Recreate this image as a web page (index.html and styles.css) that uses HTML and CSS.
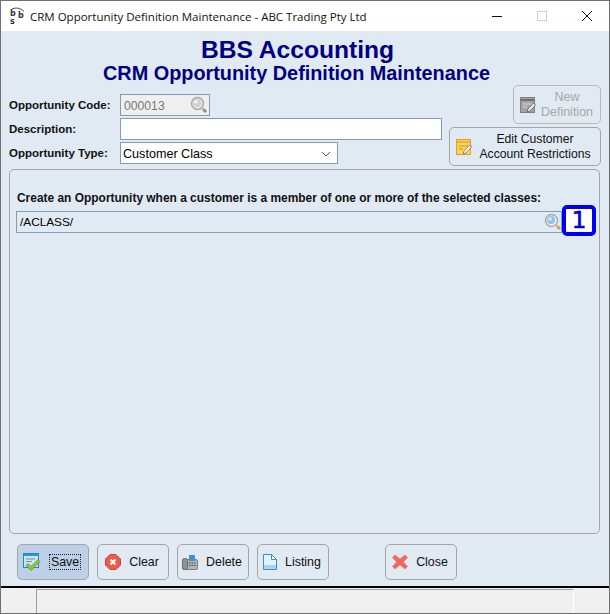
FILE: index.html
```html
<!DOCTYPE html>
<html lang="en">
<head>
<meta charset="utf-8">
<title>CRM Opportunity Definition Maintenance</title>
<link rel="stylesheet" href="styles.css">
</head>
<body>
<div class="window">
  <header class="titlebar">
    <svg class="app-icon" width="16" height="19" viewBox="0 0 16 19" fill="none">
      <path d="M1.500 2.500C5 .2 10 .5 14 4.500" stroke="#444" stroke-width="1"/>
      <text class="logo-letter" x="0" y="9">b</text>
      <text class="logo-letter" x="8" y="11">b</text>
      <text class="logo-letter" x="0" y="17">s</text>
    </svg>
    <span class="title-text">CRM Opportunity Definition Maintenance - ABC Trading Pty Ltd</span>
    <div class="win-controls">
      <svg width="10" height="10" viewBox="0 0 10 10"><path d="M0 5.500h10" stroke="#111" stroke-width="1"/></svg>
      <svg width="10" height="10" viewBox="0 0 10 10"><rect x=".5" y=".5" width="9" height="9" fill="none" stroke="#ccc"/></svg>
      <svg width="10" height="10" viewBox="0 0 10 10"><path d="M0 0l10 10M10 0L0 10" stroke="#111" stroke-width="1"/></svg>
    </div>
  </header>

  <main class="content">
    <h1 class="h-main">BBS Accounting</h1>
    <h2 class="h-sub">CRM Opportunity Definition Maintenance</h2>

    <section class="top">
      <div class="fields">
        <label class="lbl">Opportunity Code:</label>
        <div class="input code">
          <span>000013</span>
          <svg class="mag" width="18" height="18" viewBox="0 0 18 18"><circle cx="7.500" cy="7.500" r="6" fill="#e2e2e2" stroke="#a8a8a8" stroke-width="1.400"/><circle cx="7" cy="7" r="3.800" fill="#cfcfcf"/><circle cx="6" cy="6" r="1.800" fill="#f2f2f2"/><path d="M12 12l1.500 1.500" stroke="#b5b5b5" stroke-width="2"/><path d="M13.500 13.500l2.500 2.500" stroke="#8f8f8f" stroke-width="3"/></svg>
        </div>
        <label class="lbl">Description:</label>
        <div class="input desc"></div>
        <label class="lbl">Opportunity Type:</label>
        <div class="input type">
          <span>Customer Class</span>
          <svg width="10" height="6" viewBox="0 0 10 6"><path d="M1 1l4 4 4-4" fill="none" stroke="#555" stroke-width="1"/></svg>
        </div>
      </div>
      <div class="side">
        <button class="btn new" disabled>
          <svg width="16" height="16" viewBox="0 0 16 16"><rect x=".5" y=".5" width="14" height="15" fill="#a4a4a4" stroke="#808080"/><path d="M1 3h13" stroke="#707070" stroke-width="2"/><path d="M3 7h9M3 10h4" stroke="#dcdcdc"/><path d="M7 15l1-3 5.500-6 2 2-5.500 6z" fill="#eee" stroke="#606060" stroke-width=".8"/></svg>
          <span>New<br>Definition</span>
        </button>
        <button class="btn edit">
          <svg width="16" height="16" viewBox="0 0 16 16"><rect x=".5" y=".5" width="14" height="15" fill="#fbd45e" stroke="#e0a028"/><path d="M1 3h13" stroke="#f0b030" stroke-width="2"/><path d="M3 7h9M3 10h4" stroke="#cf9428"/><path d="M7 15l1-3 5.500-6 2 2-5.500 6z" fill="#f6f2e2" stroke="#a06a50" stroke-width=".8"/><path d="M13.500 6l2 2 .5-1-2-2z" fill="#d080c0"/></svg>
          <span>Edit Customer<br>Account Restrictions</span>
        </button>
      </div>
    </section>

    <section class="panel">
      <p class="panel-label">Create an Opportunity when a customer is a member of one or more of the selected classes:</p>
      <div class="class-field">
        <span>/ACLASS/</span>
        <svg class="mag" width="18" height="18" viewBox="0 0 18 18"><circle cx="7.500" cy="7.500" r="6" fill="#e8eef3" stroke="#a8a8a8" stroke-width="1.400"/><circle cx="7" cy="7" r="4" fill="#8cc4e8"/><circle cx="6" cy="6" r="2" fill="#c6e4f6"/><path d="M12 12l1.500 1.500" stroke="#b5b5b5" stroke-width="2"/><path d="M13.500 13.500l2.500 2.500" stroke="#d8a040" stroke-width="3"/></svg>
      </div>
      <div class="badge">1</div>
    </section>

    <nav class="actions">
      <button class="act active">
        <svg width="18" height="18" viewBox="0 0 18 18"><rect x=".5" y=".5" width="15" height="14" fill="#c8e6f6" stroke="#1f88c0"/><path d="M1 2h14" stroke="#2b95cc" stroke-width="2"/><path d="M3 6h9M3 8.500h6" stroke="#8a8a8a"/><path d="M5 10.500l3 3 7-7 2 2-9 9-5-5z" fill="#8ec63f" stroke="#4f8f20" stroke-width=".7"/></svg>
        <span class="focus">Save</span>
      </button>
      <button class="act">
        <svg width="16" height="16" viewBox="0 0 16 16"><path d="M5 .5h6L15.500 5v6L11 15.500H5L.5 11V5z" fill="#ee5a4a" stroke="#c9443a"/><path d="M5.500 5.500l5 5M10.500 5.500l-5 5" stroke="#fff" stroke-width="2.200"/></svg>
        <span>Clear</span>
      </button>
      <button class="act">
        <svg width="16" height="16" viewBox="0 0 16 16"><rect x=".5" y="5.500" width="15" height="10" rx="1.500" fill="#b4b4b4" stroke="#808080"/><rect x=".5" y="4.500" width="5" height="11" rx="2" fill="#939393" stroke="#6c6c6c"/><rect x="7" y="1" width="6" height="6" fill="#3f93d2"/><path d="M7 9h1.500M9.500 9H11M12 9h1.500M7 11.500h1.500M9.500 11.500H11M12 11.500h1.500" stroke="#444"/></svg>
        <span>Delete</span>
      </button>
      <button class="act">
        <svg width="14" height="16" viewBox="0 0 14 16"><path d="M.5.5h8l5 5v10H.5z" fill="#e4f3fb" stroke="#3a8fc5"/><path d="M8.500.5v5h5z" fill="#fff" stroke="#3a8fc5"/><path d="M1 11h12v4H1z" fill="#a8d4ee"/></svg>
        <span>Listing</span>
      </button>
      <button class="act close">
        <svg width="16" height="16" viewBox="0 0 16 16"><path d="M3 1l5 4 5-4 2.500 2.500L11.500 8l4 4.500L13 15 8 11l-5 4-2.500-2.500 4-4.500-4-4.500z" fill="#f2695c" stroke="#d6877d" stroke-width=".7"/></svg>
        <span>Close</span>
      </button>
    </nav>
  </main>

  <footer class="statusbar">
    <div class="status-cell"></div>
  </footer>
</div>
</body>
</html>
```
FILE: styles.css
```css
* { box-sizing: border-box; }
html, body { margin: 0; padding: 0; }
body { width: 610px; height: 614px; overflow: hidden; background: #fff; font-family: "Liberation Sans", Arial, sans-serif; font-size: 12px; color: #000; }

.window { width: 610px; height: 614px; display: flex; flex-direction: column; border: 1px solid #707070; }

.titlebar { height: 30px; flex: none; background: #fff; display: flex; align-items: center; padding-left: 9px; }
.app-icon { margin-right: 4px; }
.logo-letter { font-family: "DejaVu Sans", sans-serif; font-size: 8px; font-weight: bold; fill: #333; }
.title-text { font-family: "Open Sans", "Noto Sans", sans-serif; font-size: 11.500px; color: #111; white-space: nowrap; }
.win-controls { margin-left: auto; margin-right: 17px; display: flex; gap: 35px; }

.content { flex: 1 1 auto; background: #e1e9f3; display: flex; flex-direction: column; padding: 6px 0 0 8px; min-height: 0; }
.h-main { margin: 0; font-size: 24.600px; line-height: 26px; font-weight: bold; color: #000080; text-align: center; width: 577px; }
.h-sub { margin: 0 0 2px; font-size: 19.850px; line-height: 20px; font-weight: bold; color: #000080; text-align: center; width: 575px; }

.top { display: flex; justify-content: space-between; height: 84px; width: 592px; flex: none; }
.fields { display: grid; grid-template-columns: 111px auto; grid-auto-rows: 22px; row-gap: 2px; align-content: start; justify-items: start; align-items: center; padding-top: 9px; }
.lbl { font-weight: bold; font-size: 11.500px; color: #111; }
.input { height: 22px; background: #fff; border: 1px solid #7f9db9; display: flex; align-items: center; padding: 1px 2px 0; font-size: 12.600px; }
.code { width: 90px; background: #efefef; color: #777; justify-content: space-between; padding-left: 3px; padding-right: 0; font-size: 12.200px; }
.code .mag { margin: -1px 1px 0 0; }
.desc { width: 322px; }
.type { width: 218px; justify-content: space-between; padding-right: 6px; }

.side { display: flex; flex-direction: column; align-items: flex-end; gap: 3px; }
.btn { font-family: inherit; font-size: 12px; line-height: 15px; background: #e1e9f3; border: 1px solid #a5a5a5; border-radius: 5px; display: flex; align-items: center; padding: 0 6px; text-align: center; color: #111; }
.btn span { flex: 1; padding-left: 3px; }
.new { width: 88px; height: 39px; color: #a8a8a8; border-color: #b8b8b8; font-size: 12.500px; padding-right: 5px; }
.edit { width: 152px; height: 39px; font-size: 12.200px; padding-right: 5px; }

.panel { position: relative; width: 591px; height: 365px; flex: none; border: 1px solid #a5a5a5; border-radius: 5px; padding: 21px 7px 0; }
.panel-label { margin: 0 0 6px; font-weight: bold; font-size: 11.950px; line-height: 14px; color: #111; }
.class-field { width: 546px; height: 22px; margin-left: -1px; border: 1px solid #7f9db9; display: flex; align-items: center; justify-content: space-between; padding: 0 0 0 3px; font-size: 11.800px; }
.class-field .mag { margin-right: -1px; }
.badge { position: absolute; left: 552px; top: 35px; width: 34px; height: 31px; background: #fff; border: 4px solid #0000f0; border-radius: 5px; color: #0000e0; font-family: "DejaVu Sans", sans-serif; font-size: 23px; -webkit-text-stroke: .6px #0000e0; line-height: 23px; text-align: center; }

.actions { display: flex; gap: 8px; padding: 10px 0 0 8px; }
.act { font-family: inherit; font-size: 12.400px; width: 72px; height: 36px; background: #e1e9f3; border: 1px solid #a5a5a5; border-radius: 5px; display: flex; align-items: center; justify-content: center; gap: 8px; padding: 0 2px 0 0; color: #111; }
.act.active { background: #bdd0e8; }
.focus { border: 1px dotted #222; padding: 0 1px; }
.act.close { margin-left: 48px; }

.statusbar { height: 27px; flex: none; background: #f0f0f0; border-top: 2px solid #000; padding: 1px 35px 0 35px; display: flex; }
.status-cell { flex: 1; border-left: 1px solid #a0a0a0; border-top: 1px solid #a0a0a0; border-right: 1px solid #fff; }
```
